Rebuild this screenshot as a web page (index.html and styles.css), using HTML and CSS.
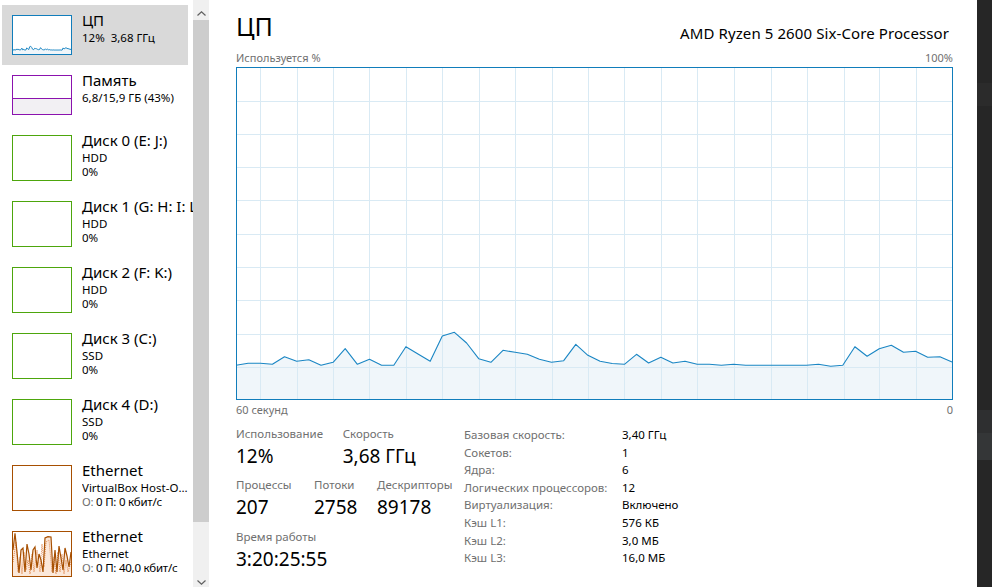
FILE: index.html
```html
<!DOCTYPE html>
<html lang="ru">
<head>
<meta charset="utf-8">
<title>Диспетчер задач — ЦП</title>
<link rel="stylesheet" href="styles.css">
</head>
<body>
<div class="app">
  <aside class="sidebar">
    <div class="item short selected">
      <div class="thumb cpu">
        <svg viewBox="0 0 716 333" preserveAspectRatio="none">
          <polygon class="cpu-fill" points="0,298.3 12.1,296.3 24.3,296.3 36.4,297.3 48.5,289.7 60.7,294.3 72.8,292.7 85,298.3 97.1,295.3 109.2,281.7 121.4,297.3 133.5,292.3 145.6,298.3 157.8,298.3 169.9,279.7 182,287 194.2,294.3 206.3,269 218.4,265.3 230.6,276 242.7,291.7 254.9,295.3 267,283.3 279.1,285.3 291.3,287.3 303.4,292.3 315.5,295.3 327.7,293.7 339.8,277.3 351.9,288.3 364.1,294.3 376.2,296.5 388.4,297.3 400.5,287.3 412.6,296 424.8,290.3 436.9,296 449,294.3 461.2,297.3 473.3,297.3 485.4,298.3 497.6,297.3 509.7,298.3 521.8,298.3 534,298.3 546.1,298.3 558.2,298.3 570.4,298.3 582.5,297.3 594.7,299.3 606.8,298.3 618.9,279.7 631.1,289.3 643.2,281.7 655.3,278.3 667.5,285.3 679.6,284.3 691.7,290.3 703.9,289.7 716,295 716,333 0,333"/>
          <polyline class="cpu-line thin" points="0,298.3 12.1,296.3 24.3,296.3 36.4,297.3 48.5,289.7 60.7,294.3 72.8,292.7 85,298.3 97.1,295.3 109.2,281.7 121.4,297.3 133.5,292.3 145.6,298.3 157.8,298.3 169.9,279.7 182,287 194.2,294.3 206.3,269 218.4,265.3 230.6,276 242.7,291.7 254.9,295.3 267,283.3 279.1,285.3 291.3,287.3 303.4,292.3 315.5,295.3 327.7,293.7 339.8,277.3 351.9,288.3 364.1,294.3 376.2,296.5 388.4,297.3 400.5,287.3 412.6,296 424.8,290.3 436.9,296 449,294.3 461.2,297.3 473.3,297.3 485.4,298.3 497.6,297.3 509.7,298.3 521.8,298.3 534,298.3 546.1,298.3 558.2,298.3 570.4,298.3 582.5,297.3 594.7,299.3 606.8,298.3 618.9,279.7 631.1,289.3 643.2,281.7 655.3,278.3 667.5,285.3 679.6,284.3 691.7,290.3 703.9,289.7 716,295"/>
        </svg>
      </div>
      <div class="info">
        <div class="title">ЦП</div>
        <div class="sub">12%&nbsp; 3,68 ГГц</div>
      </div>
    </div>
    <div class="item short">
      <div class="thumb mem">
        <svg viewBox="0 0 58 38" preserveAspectRatio="none">
          <rect x="0" y="22" width="58" height="16" class="mem-fill"/>
          <line x1="0" y1="22.5" x2="58" y2="22.5" class="mem-line"/>
        </svg>
      </div>
      <div class="info">
        <div class="title">Память</div>
        <div class="sub">6,8/15,9 ГБ (43%)</div>
      </div>
    </div>
    <div class="item">
      <div class="thumb disk"></div>
      <div class="info">
        <div class="title">Диск 0 (E: J:)</div>
        <div class="sub">HDD</div>
        <div class="sub">0%</div>
      </div>
    </div>
    <div class="item">
      <div class="thumb disk"></div>
      <div class="info">
        <div class="title">Диск 1 (G: H: I: L:)</div>
        <div class="sub">HDD</div>
        <div class="sub">0%</div>
      </div>
    </div>
    <div class="item">
      <div class="thumb disk"></div>
      <div class="info">
        <div class="title">Диск 2 (F: K:)</div>
        <div class="sub">HDD</div>
        <div class="sub">0%</div>
      </div>
    </div>
    <div class="item">
      <div class="thumb disk"></div>
      <div class="info">
        <div class="title">Диск 3 (C:)</div>
        <div class="sub">SSD</div>
        <div class="sub">0%</div>
      </div>
    </div>
    <div class="item">
      <div class="thumb disk"></div>
      <div class="info">
        <div class="title">Диск 4 (D:)</div>
        <div class="sub">SSD</div>
        <div class="sub">0%</div>
      </div>
    </div>
    <div class="item">
      <div class="thumb net"></div>
      <div class="info">
        <div class="title">Ethernet</div>
        <div class="sub ell">VirtualBox Host-Only Ethernet Adapter</div>
        <div class="sub tight"><span class="dim">О:</span> 0 П: 0 кбит/с</div>
      </div>
    </div>
    <div class="item">
      <div class="thumb net">
        <svg viewBox="0 0 58 44" preserveAspectRatio="none">
          <polygon class="net-fill" points="0,18 2,1.3 4,20 6,41 8,18 10,16 12,40 14,12 16,22 18,38 20,18 22,15 24,36 26,22 28,28 30,40 32,6 35,4.7 38,5 40,41 42,18 44,40 46,14 48,26 50,38 52,16 54,24 56,35 58,20 58,44 0,44"/>
          <polyline class="net-dash" points="0,30 3,10 5,40 7,25 9,42 11,20 13,38 15,28 17,42 19,22 21,40 24,18 27,40 29,12 31,35 33,10 36,8 39,40 41,25 43,42 45,20 47,40 49,22 51,42 53,28 55,40 58,30"/>
          <polyline class="net-line" points="0,18 2,1.3 4,20 6,41 8,18 10,16 12,40 14,12 16,22 18,38 20,18 22,15 24,36 26,22 28,28 30,40 32,6 35,4.7 38,5 40,41 42,18 44,40 46,14 48,26 50,38 52,16 54,24 56,35 58,20"/>
        </svg>
      </div>
      <div class="info">
        <div class="title">Ethernet</div>
        <div class="sub">Ethernet</div>
        <div class="sub tight"><span class="dim">О:</span> 0 П: 40,0 кбит/с</div>
      </div>
    </div>
  </aside>

  <div class="scrollbar">
    <div class="sb-up">
      <svg width="9" height="5" viewBox="0 0 9 5"><polyline points="0.5,4.5 4.5,0.8 8.5,4.5" class="chev"/></svg>
    </div>
    <div class="sb-thumb"></div>
    <div class="sb-down">
      <svg width="9" height="5" viewBox="0 0 9 5"><polyline points="0.5,0.5 4.5,4.2 8.5,0.5" class="chev"/></svg>
    </div>
  </div>

  <main class="main">
    <div class="head">
      <div class="h-title">ЦП</div>
      <div class="h-proc">AMD Ryzen 5 2600 Six-Core Processor</div>
    </div>
    <div class="axis top"><span>Используется %</span><span>100%</span></div>
    <svg class="chart" width="717" height="333" viewBox="0 0 717 333">
      <polygon class="cpu-fill" points="0,298.3 12.1,296.3 24.3,296.3 36.4,297.3 48.5,289.7 60.7,294.3 72.8,292.7 85,298.3 97.1,295.3 109.2,281.7 121.4,297.3 133.5,292.3 145.6,298.3 157.8,298.3 169.9,279.7 182,287 194.2,294.3 206.3,269 218.4,265.3 230.6,276 242.7,291.7 254.9,295.3 267,283.3 279.1,285.3 291.3,287.3 303.4,292.3 315.5,295.3 327.7,293.7 339.8,277.3 351.9,288.3 364.1,294.3 376.2,296.5 388.4,297.3 400.5,287.3 412.6,296 424.8,290.3 436.9,296 449,294.3 461.2,297.3 473.3,297.3 485.4,298.3 497.6,297.3 509.7,298.3 521.8,298.3 534,298.3 546.1,298.3 558.2,298.3 570.4,298.3 582.5,297.3 594.7,299.3 606.8,298.3 618.9,279.7 631.1,289.3 643.2,281.7 655.3,278.3 667.5,285.3 679.6,284.3 691.7,290.3 703.9,289.7 716,295 716,333 0,333"/>
      <g class="grid">
        <line x1="24.5" y1="0" x2="24.5" y2="333"/>
        <line x1="61.5" y1="0" x2="61.5" y2="333"/>
        <line x1="97.5" y1="0" x2="97.5" y2="333"/>
        <line x1="133.5" y1="0" x2="133.5" y2="333"/>
        <line x1="170.5" y1="0" x2="170.5" y2="333"/>
        <line x1="206.5" y1="0" x2="206.5" y2="333"/>
        <line x1="243.5" y1="0" x2="243.5" y2="333"/>
        <line x1="279.5" y1="0" x2="279.5" y2="333"/>
        <line x1="316.5" y1="0" x2="316.5" y2="333"/>
        <line x1="352.5" y1="0" x2="352.5" y2="333"/>
        <line x1="388.5" y1="0" x2="388.5" y2="333"/>
        <line x1="425.5" y1="0" x2="425.5" y2="333"/>
        <line x1="461.5" y1="0" x2="461.5" y2="333"/>
        <line x1="498.5" y1="0" x2="498.5" y2="333"/>
        <line x1="535.5" y1="0" x2="535.5" y2="333"/>
        <line x1="571.5" y1="0" x2="571.5" y2="333"/>
        <line x1="608.5" y1="0" x2="608.5" y2="333"/>
        <line x1="643.5" y1="0" x2="643.5" y2="333"/>
        <line x1="680.5" y1="0" x2="680.5" y2="333"/>
        <line x1="0" y1="34.5" x2="717" y2="34.5"/>
        <line x1="0" y1="67.5" x2="717" y2="67.5"/>
        <line x1="0" y1="100.5" x2="717" y2="100.5"/>
        <line x1="0" y1="133.5" x2="717" y2="133.5"/>
        <line x1="0" y1="167.5" x2="717" y2="167.5"/>
        <line x1="0" y1="200.5" x2="717" y2="200.5"/>
        <line x1="0" y1="233.5" x2="717" y2="233.5"/>
        <line x1="0" y1="267.5" x2="717" y2="267.5"/>
        <line x1="0" y1="300.5" x2="717" y2="300.5"/>
      </g>
      <polyline class="cpu-line" points="0,298.3 12.1,296.3 24.3,296.3 36.4,297.3 48.5,289.7 60.7,294.3 72.8,292.7 85,298.3 97.1,295.3 109.2,281.7 121.4,297.3 133.5,292.3 145.6,298.3 157.8,298.3 169.9,279.7 182,287 194.2,294.3 206.3,269 218.4,265.3 230.6,276 242.7,291.7 254.9,295.3 267,283.3 279.1,285.3 291.3,287.3 303.4,292.3 315.5,295.3 327.7,293.7 339.8,277.3 351.9,288.3 364.1,294.3 376.2,296.5 388.4,297.3 400.5,287.3 412.6,296 424.8,290.3 436.9,296 449,294.3 461.2,297.3 473.3,297.3 485.4,298.3 497.6,297.3 509.7,298.3 521.8,298.3 534,298.3 546.1,298.3 558.2,298.3 570.4,298.3 582.5,297.3 594.7,299.3 606.8,298.3 618.9,279.7 631.1,289.3 643.2,281.7 655.3,278.3 667.5,285.3 679.6,284.3 691.7,290.3 703.9,289.7 716,295"/>
      <rect class="frame" x="0.5" y="0.5" width="716" height="332"/>
    </svg>
    <div class="axis bottom"><span>60 секунд</span><span>0</span></div>

    <section class="stats">
      <div class="stats-left">
        <div class="group">
          <div class="cell w1"><div class="lbl">Использование</div><div class="val">12%</div></div>
          <div class="cell"><div class="lbl">Скорость</div><div class="val">3,68 ГГц</div></div>
        </div>
        <div class="group">
          <div class="cell w2"><div class="lbl">Процессы</div><div class="val">207</div></div>
          <div class="cell w3"><div class="lbl">Потоки</div><div class="val">2758</div></div>
          <div class="cell"><div class="lbl">Дескрипторы</div><div class="val">89178</div></div>
        </div>
        <div class="group">
          <div class="cell"><div class="lbl">Время работы</div><div class="val">3:20:25:55</div></div>
        </div>
      </div>
      <div class="specs">
        <div class="k">Базовая скорость:</div><div class="v">3,40 ГГц</div>
        <div class="k">Сокетов:</div><div class="v">1</div>
        <div class="k">Ядра:</div><div class="v">6</div>
        <div class="k">Логических процессоров:</div><div class="v">12</div>
        <div class="k">Виртуализация:</div><div class="v">Включено</div>
        <div class="k">Кэш L1:</div><div class="v">576 КБ</div>
        <div class="k">Кэш L2:</div><div class="v">3,0 МБ</div>
        <div class="k">Кэш L3:</div><div class="v">16,0 МБ</div>
      </div>
    </section>
  </main>

  <div class="strip">
    <div class="band b1"></div>
    <div class="band b2"></div>
    <div class="band b3"></div>
  </div>
</div>
</body>
</html>
```

FILE: styles.css
```css
html, body {
  margin: 0;
  padding: 0;
  background: #ffffff;
  font-family: "Noto Sans", "Open Sans", sans-serif;
  color: #000;
  overflow: hidden;
}

.app {
  display: flex;
  width: 992px;
  height: 587px;
}

/* ---------- left list ---------- */
.sidebar {
  width: 193px;
  flex: none;
  overflow: hidden;
  box-sizing: border-box;
  padding: 5px 0 0 2px;
}

.item {
  display: flex;
  align-items: flex-start;
  gap: 10px;
  width: 186px;
  box-sizing: border-box;
  padding: 10px;
}

.item.selected {
  background: #d9d9d9;
}

.thumb {
  flex: none;
  width: 60px;
  height: 46px;
  box-sizing: border-box;
  border: 1px solid;
  background: #fff;
}

.item.short .thumb {
  height: 40px;
}

.thumb svg {
  display: block;
  width: 100%;
  height: 100%;
}

.thumb.cpu { border-color: #117dbb; }
.thumb.mem { border-color: #8b12ae; }
.thumb.disk { border-color: #4da60c; }
.thumb.net { border-color: #a74f01; }

.mem-fill { fill: #f2f0f3; }
.mem-line { stroke: #8b12ae; stroke-width: 1; vector-effect: non-scaling-stroke; }

.net-fill { fill: #fbe8da; }
.net-line { fill: none; stroke: #a74f01; stroke-width: 1.2; vector-effect: non-scaling-stroke; }
.net-dash { fill: none; stroke: #e28a50; stroke-width: 1; stroke-dasharray: 1 1; vector-effect: non-scaling-stroke; }

.info {
  margin-top: -5px;
  width: 108px;
  min-width: 0;
}

.title {
  font-size: 15px;
  line-height: 21px;
  white-space: nowrap;
}

.sub {
  font-size: 11.5px;
  line-height: 14.3px;
  white-space: nowrap;
}

.sub.ell {
  overflow: hidden;
  text-overflow: ellipsis;
  width: 106px;
}

.sub.tight {
  letter-spacing: -0.25px;
}

.dim { color: #707070; }

/* ---------- scrollbar ---------- */
.scrollbar {
  width: 16px;
  flex: none;
  background: #f0f0f0;
  display: flex;
  flex-direction: column;
}

.sb-up {
  height: 20px;
  display: flex;
  justify-content: center;
  align-items: flex-end;
}

.sb-up svg { display: block; margin-bottom: 4px; }

.sb-thumb {
  height: 502px;
  background: #cdcdcd;
}

.sb-down {
  flex: 1;
  display: flex;
  justify-content: center;
  align-items: flex-end;
}

.sb-down svg { display: block; margin-bottom: 2px; }

.chev {
  fill: none;
  stroke: #606060;
  stroke-width: 1.2;
}

/* ---------- main ---------- */
.main {
  flex: 1;
  min-width: 0;
  box-sizing: border-box;
  padding: 11px 24px 0 27px;
}

.head {
  display: flex;
  justify-content: space-between;
  align-items: flex-start;
  height: 30px;
}

.h-title {
  font-size: 25px;
  line-height: 30px;
}

.h-proc {
  font-size: 15px;
  line-height: 20px;
  margin-top: 12px;
  margin-right: 4px;
  letter-spacing: 0.1px;
}

.axis {
  display: flex;
  justify-content: space-between;
  font-size: 11px;
  line-height: 14px;
  color: #707070;
}

.axis.top { margin-top: 10px; margin-bottom: 2px; }
.axis.bottom { margin-top: 3px; }

.chart {
  display: block;
  width: 717px;
  height: 333px;
}

.cpu-fill { fill: #f0f6fa; }
.grid line { stroke: #d9eaf4; stroke-width: 1; }
.cpu-line { fill: none; stroke: #1a86c4; stroke-width: 1.1; stroke-linejoin: round; }
.cpu-line.thin { stroke-width: 1; vector-effect: non-scaling-stroke; }
.frame { fill: none; stroke: #117dbb; stroke-width: 1; }

/* ---------- stats ---------- */
.stats {
  display: flex;
  align-items: flex-start;
  margin-top: 9px;
}

.stats-left {
  width: 228px;
  flex: none;
}

.group {
  display: flex;
  margin-bottom: 9.3px;
}

.w1 { width: 106.7px; }
.w2 { width: 78px; }
.w3 { width: 63px; }

.lbl {
  font-size: 11.5px;
  line-height: 15px;
  color: #707070;
  white-space: nowrap;
}

.val {
  font-size: 19px;
  line-height: 24px;
  margin-top: 3px;
  white-space: nowrap;
}

.specs {
  display: grid;
  grid-template-columns: 158px auto;
  grid-auto-rows: 17.6px;
  align-content: start;
  font-size: 11.5px;
  line-height: 17.6px;
  white-space: nowrap;
}

.specs .k { color: #707070; }
.specs .v { color: #000; }

/* ---------- dark strip ---------- */
.strip {
  width: 15px;
  flex: none;
  background: #262626;
}

.band { height: 23px; }
.b1 { margin-top: 83px; background: #2b2b2b; }
.b2 { margin-top: 304px; background: #2e2f30; }
.b3 { height: 27px; background: #343637; }
```
